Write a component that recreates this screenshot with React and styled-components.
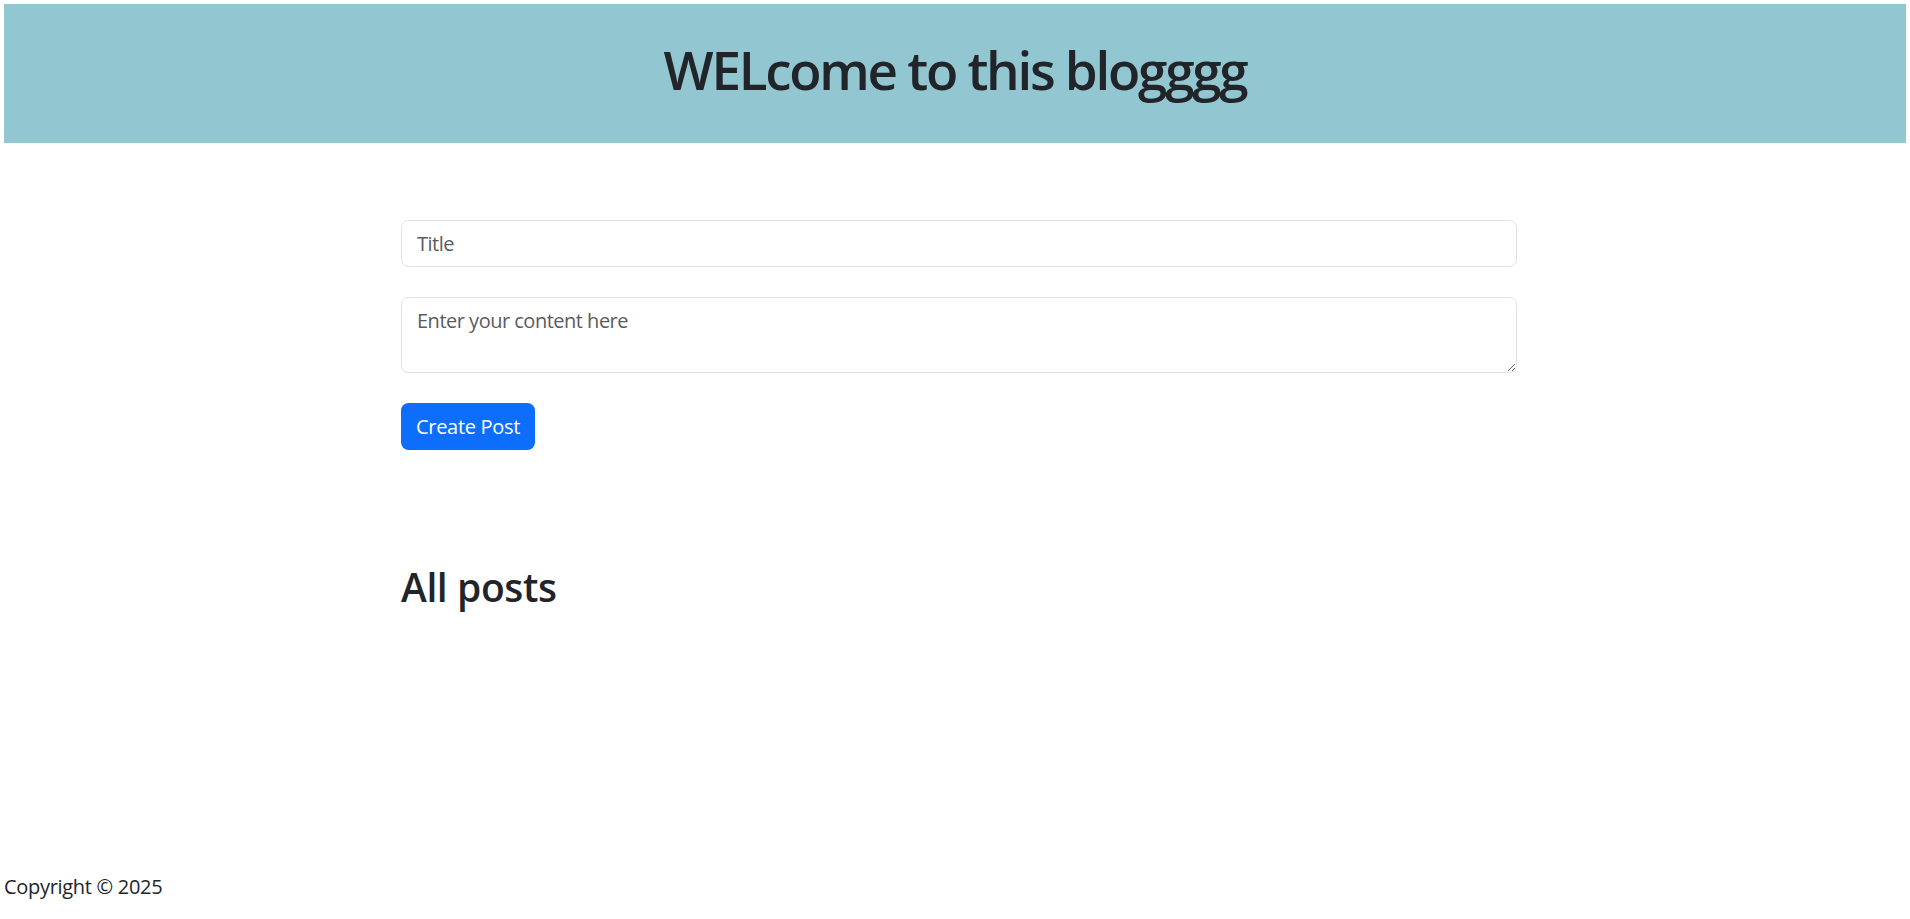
import React from 'react'
import styled, { createGlobalStyle } from 'styled-components'

const GlobalStyle = createGlobalStyle`
  * {
    box-sizing: border-box;
  }
  body {
    margin: 4px;
    font-family: 'Open Sans', 'Noto Sans', sans-serif;
    font-size: 20px;
    line-height: 1.5;
    letter-spacing: -0.3px;
    color: #212529;
    background: #fff;
  }
`

const Page = styled.div`
  min-height: calc(100vh - 8px);
  display: flex;
  flex-direction: column;
`

const Header = styled.header`
  height: 139px;
  padding-bottom: 8px;
  background: #92c6d0;
  display: flex;
  align-items: center;
  justify-content: center;

  h1 {
    margin: 0;
    font-size: 53px;
    font-weight: 600;
    line-height: 1.2;
    color: #212529;
    letter-spacing: -2.3px;
  }
`

const Main = styled.main`
  width: 1116px;
  margin: 77px 0 0 calc(50% - 554px);
  display: flex;
  flex-direction: column;
`

const Form = styled.form`
  display: flex;
  flex-direction: column;
  align-items: flex-start;
  gap: 30px;
`

const Field = styled.input`
  width: 100%;
  height: 47px;
  padding: 7.5px 15px;
  font-family: inherit;
  font-size: 20px;
  line-height: 1.5;
  letter-spacing: -0.5px;
  color: #212529;
  border: 1.25px solid #dee2e6;
  border-radius: 7.5px;
  outline: none;

  &::placeholder {
    color: #595c5f;
  }
`

const Area = styled(Field).attrs({ as: 'textarea' })`
  height: 76px;
  resize: vertical;
  display: block;
`

const Button = styled.button`
  height: 47px;
  padding: 0 15px;
  font-family: inherit;
  font-size: 20px;
  letter-spacing: inherit;
  color: #fff;
  background: #0d6efd;
  border: none;
  border-radius: 7.5px;
  cursor: pointer;
`

const SectionTitle = styled.h2`
  margin: 114px 0 0;
  font-size: 39px;
  font-weight: 600;
  line-height: 1.2;
  letter-spacing: -0.4px;
  color: #212529;
`

const Footer = styled.footer`
  margin-top: auto;
  padding-bottom: 13px;
  font-size: 20px;
  color: #212529;
`

export default function App() {
  return (
    <Page>
      <GlobalStyle />
      <Header>
        <h1>WELcome to this blogggg</h1>
      </Header>
      <Main>
        <Form onSubmit={(e) => e.preventDefault()}>
          <Field type='text' placeholder='Title' />
          <Area placeholder='Enter your content here' />
          <Button type='submit'>Create Post</Button>
        </Form>
        <SectionTitle>All posts</SectionTitle>
      </Main>
      <Footer>Copyright © 2025</Footer>
    </Page>
  )
}
